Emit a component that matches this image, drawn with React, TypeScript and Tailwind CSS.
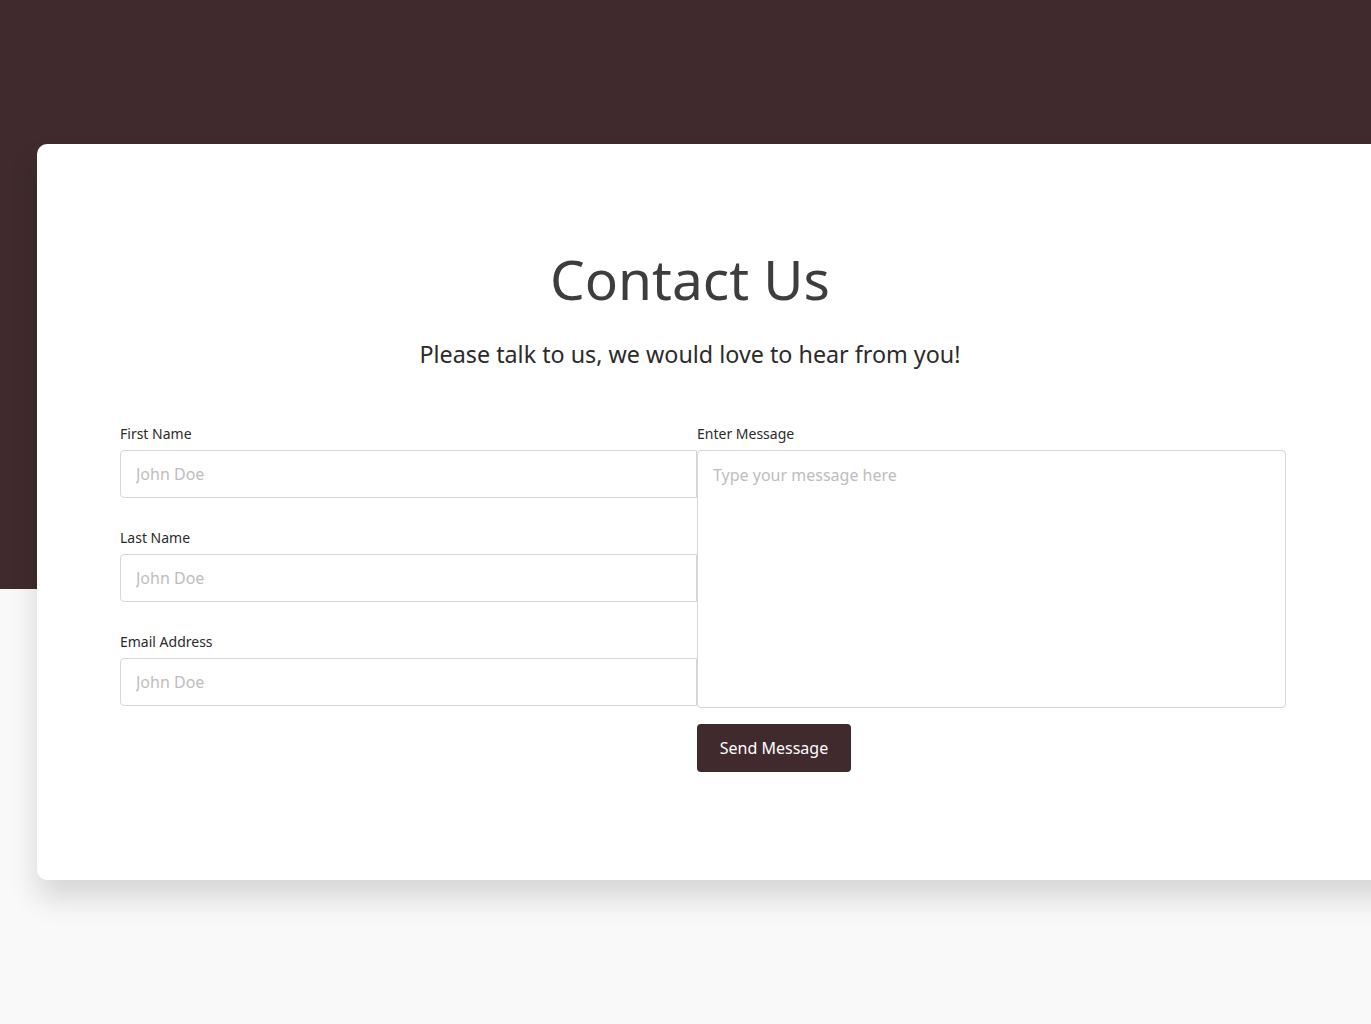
import React from "react";

export default function App() {
  const font = { fontFamily: '"Noto Sans", "Open Sans", sans-serif' };
  return (
    <div
      className="min-h-screen w-full overflow-hidden bg-[linear-gradient(to_bottom,#402a2e_0px,#402a2e_589px,#f9f9f9_589px)] pt-[144px]"
      style={font}
    >
      <div className="ml-[37px] h-[736px] w-[1400px] rounded-l-[10px] bg-white pl-[83px] pt-[95px] shadow-[0_18px_30px_rgba(0,0,0,0.14)]">
        <div className="w-[1140px] text-center">
          <h1 className="text-[55px] leading-[80px] text-[#3d3d3d]">Contact Us</h1>
          <p className="mt-[20px] text-[23.3px] leading-[30px] text-[#2b2b2b]">
            Please talk to us, we would love to hear from you!
          </p>
        </div>
        <div className="mt-[55px] flex">
          <div className="flex w-[577px] flex-col gap-[30px]">
            {["First Name", "Last Name", "Email Address"].map((l) => (
              <div key={l} className="flex flex-col">
                <label className="mb-[6px] text-[14px] leading-[20px] text-[#2b2b2b]">{l}</label>
                <input
                  placeholder="John Doe"
                  className="h-[48px] w-full rounded-l-[4px] border border-[#d6d6d6] px-[15px] text-[16px] outline-none placeholder:text-[#bdbdbd]"
                />
              </div>
            ))}
          </div>
          <div className="flex w-[589px] flex-col">
            <label className="mb-[6px] text-[14px] leading-[20px] text-[#2b2b2b]">Enter Message</label>
            <textarea
              placeholder="Type your message here"
              className="h-[258px] w-full resize-none rounded-[4px] border border-[#d6d6d6] px-[15px] py-[12px] text-[16px] outline-none placeholder:text-[#bdbdbd]"
            />
            <button className="mt-[16px] h-[48px] w-[154px] rounded-[4px] bg-[#402a2e] text-[16px] text-white">
              Send Message
            </button>
          </div>
        </div>
      </div>
    </div>
  );
}
